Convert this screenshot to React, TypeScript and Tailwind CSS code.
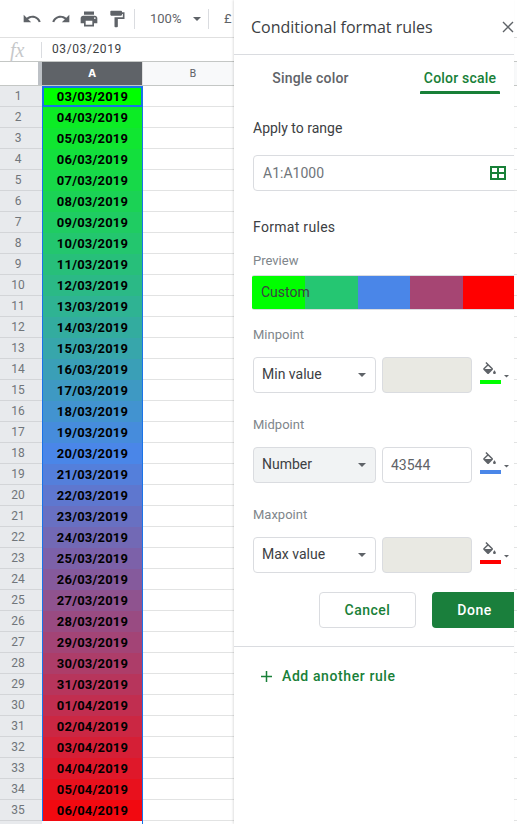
import React from "react";

const mix = (a: number[], b: number[], t: number) =>
  `rgb(${a.map((v, i) => Math.round(v + (b[i] - v) * t)).join(",")})`;
const G = [0, 255, 0];
const M = [74, 134, 232];
const R = [255, 0, 0];

const pad = (n: number) => String(n).padStart(2, "0");
const rows = Array.from({ length: 35 }, (_, i) => {
  const n = i + 1;
  const label = n <= 29 ? `${pad(n + 2)}/03/2019` : `${pad(n - 29)}/04/2019`;
  let color: string;
  if (n === 1) color = mix(G, G, 0);
  else if (n <= 18) color = mix(G, M, (n + 1) / 19);
  else color = mix(M, R, ((n - 18) / 17) * 0.93);
  return { n, label, color };
});

const Mi = ({ d, size = 24, className = "" }: { d: string; size?: number; className?: string }) => (
  <svg width={size} height={size} viewBox="0 0 24 24" className={className} fill="currentColor">
    <path d={d} />
  </svg>
);

const Caret = ({ w = 8, className = "" }: { w?: number; className?: string }) => (
  <svg width={w} height={w / 2} viewBox="0 0 8 4" className={className} fill="currentColor">
    <path d="M0 0h8L4 4z" />
  </svg>
);

const FILL =
  "M16.56 8.94L7.62 0 6.21 1.41l2.38 2.38-5.15 5.15c-.59.59-.59 1.54 0 2.12l5.5 5.5c.29.29.68.44 1.06.44s.77-.15 1.06-.44l5.5-5.5c.59-.58.59-1.53 0-2.12zM5.21 10L10 5.21 14.79 10H5.21zM19 11.5s-2 2.17-2 3.5c0 1.1.9 2 2 2s2-.9 2-2c0-1.33-2-3.5-2-3.5z";

function Point({
  label,
  select,
  value,
  color,
  gray,
  className = "",
}: {
  label: string;
  select: string;
  value?: string;
  color: string;
  gray?: boolean;
  className?: string;
}) {
  return (
    <div className={className}>
      <div className="text-[13px] leading-[16px] text-[#80868b]">{label}</div>
      <div className="mt-[14px] flex h-[36px]">
        <div
          className={`flex h-[36px] w-[123px] items-center justify-between rounded-[4px] border border-[#dadce0] pl-[8px] pr-[8px] text-[14px] text-[#3c4043] ${
            gray ? "bg-[#f1f3f4]" : "bg-white"
          }`}
        >
          <span className="pb-[2px]">{select}</span>
          <Caret className="mr-[1px] text-[#5f6368]" />
        </div>
        <div
          className={`ml-[6px] flex h-[36px] w-[90px] items-center rounded-[4px] border border-[#dadce0] pl-[8px] text-[14px] text-[#5f6368] ${
            value ? "bg-white" : "bg-[#e9e9e3]"
          }`}
        >
          {value}
        </div>
        <div className="relative ml-[8px] w-[32px]">
          <Mi d={FILL} size={17} className="ml-[1px] mt-[5px] text-[#5f6368]" />
          <div className={`ml-[0px] mt-[1px] h-[4px] w-[21px] ${color}`} />
          <Caret w={5} className="absolute left-[24px] top-[18px] text-[#5f6368]" />
        </div>
      </div>
    </div>
  );
}

function Toolbar() {
  return (
    <div className="flex h-[38px] items-center border-b border-[#e0e0e0] bg-white text-[#5f6368]">
      <Mi className="ml-[22px]" size={20} d="M12.5 8c-2.65 0-5.05.99-6.9 2.6L2 7v9h9l-3.62-3.62c1.39-1.16 3.16-1.88 5.12-1.88 3.54 0 6.55 2.31 7.6 5.5l2.37-.78C21.08 11.03 17.15 8 12.5 8z" />
      <Mi className="ml-[9px]" size={20} d="M18.4 10.6C16.55 8.99 14.15 8 11.5 8c-4.65 0-8.58 3.03-9.96 7.22L3.9 16c1.05-3.19 4.05-5.5 7.6-5.5 1.95 0 3.73.72 5.12 1.88L13 16h9V7l-3.6 3.6z" />
      <Mi className="ml-[8px]" size={20} d="M19 8H5c-1.66 0-3 1.34-3 3v6h4v4h12v-4h4v-6c0-1.66-1.34-3-3-3zm-3 11H8v-5h8v5zm3-7c-.55 0-1-.45-1-1s.45-1 1-1 1 .45 1 1-.45 1-1 1zm-1-9H6v4h12V3z" />
      <Mi className="ml-[8px]" size={20} d="M18 4V3c0-.55-.45-1-1-1H5c-.55 0-1 .45-1 1v4c0 .55.45 1 1 1h12c.55 0 1-.45 1-1V6h1v4H9v11c0 .55.45 1 1 1h2c.55 0 1-.45 1-1v-9h8V4h-3z" />
      <div className="ml-[7px] h-[20px] w-px bg-[#dadce0]" />
      <span className="ml-[15px] w-[29px] text-[13px]">100%</span>
      <Caret className="ml-[14px]" />
      <div className="ml-[7px] h-[20px] w-px bg-[#dadce0]" />
      <span className="ml-[15px] text-[13px]">£</span>
    </div>
  );
}

function Sheet() {
  return (
    <div className="w-[234px] shrink-0 overflow-hidden bg-white font-['Roboto',sans-serif]">
      <Toolbar />
      <div className="flex h-[24px] items-center border-b border-[#c4c7c5] bg-white">
        <span className="ml-[10px] w-[31px] font-['Liberation_Serif',serif] text-[20px] italic leading-none text-[#c6c8ca]">fx</span>
        <div className="h-[16px] w-px bg-[#dadce0]" />
        <span className="ml-[10px] pb-[1px] text-[12px] tracking-[0.6px] text-[#3c4043]">03/03/2019</span>
      </div>
      <div className="flex h-[24px] border-b border-[#c4c7c5] bg-[#f8f9fa] text-[12px]">
        <div className="h-full w-[42px] shrink-0 border-r-[4px] border-[#bdc1c6] bg-white" />
        <div className="flex w-[100px] shrink-0 items-center justify-center bg-[#5f6368] font-['DejaVu_Sans',sans-serif] text-[10px] font-bold text-white">A</div>
        <div className="flex w-[101px] shrink-0 items-center justify-center border-l border-[#e0e0e0] font-['DejaVu_Sans',sans-serif] text-[10px] text-[#5f6368]">B</div>
      </div>
      {rows.map((r) => (
        <div key={r.n} className="flex h-[21px]">
          <div className="flex w-[42px] items-center justify-center border-b border-[#d3d5d8] bg-[#e8eaed] pr-[6px] text-[12px] text-[#70757a]">{r.n}</div>
          <div
            className={`box-border flex w-[101px] items-center justify-center text-[13px] font-bold tracking-[0.2px] text-black ${
              r.n === 1 ? "border-2 border-[#1a73e8]" : "border-x border-[#1a73e8]"
            }`}
            style={{ backgroundColor: r.color }}
          >
            {r.label}
          </div>
          <div className="flex-1 border-b border-[#e2e3e3]" />
        </div>
      ))}
      <div className="flex h-[4px]">
        <div className="w-[42px] bg-[#e8eaed]" />
        <div className="w-[101px] border-r border-[#1a73e8]" />
      </div>
    </div>
  );
}

function Panel() {
  return (
    <div className="z-10 h-[824px] w-[280px] shrink-0 overflow-hidden bg-white font-['Roboto',sans-serif] shadow-[-1px_0_2px_rgba(0,0,0,0.12)]">
      <div className="flex h-[55px] items-center justify-between border-b border-[#dadce0] pl-[17px]">
        <span className="font-['Open_Sans',sans-serif] text-[16px] [font-weight:500] text-[#3c4043]">Conditional format rules</span>
        <svg width="12" height="12" viewBox="0 0 12 12" className="text-[#5f6368]" stroke="currentColor" strokeWidth="1.4">
          <path d="M1 1l10 10M11 1L1 11" />
        </svg>
      </div>
      <div className="flex h-[39px] text-[14px] font-medium leading-[16px] tracking-[0.2px]">
        <div className="ml-[38px] w-[77px] pt-[15px] text-center text-[#5f6368]">Single color</div>
        <div className="ml-[71px] flex w-[80px] flex-col items-center justify-end">
          <span className="text-[#188038]">Color scale</span>
          <div className="mt-[5px] h-[3px] w-[80px] rounded-t-[1px] bg-[#188038]" />
        </div>
      </div>
      <div className="pl-[19px]">
        <div className="mt-[26px] text-[14px] leading-[16px] text-[#3c4043]">Apply to range</div>
        <div className="mt-[19px] flex h-[36px] w-[280px] items-center rounded-[4px] border border-[#dadce0] pl-[9px] text-[14px] text-[#70757a]">
          <span className="w-[227px]">A1:A1000</span>
          <svg width="16" height="14" viewBox="0 0 16 14" fill="none" stroke="#188038" strokeWidth="2">
            <path d="M1 1h14v12H1zM8 1v12M1 7h14" />
          </svg>
        </div>
        <div className="mt-[28px] text-[14px] leading-[16px] tracking-[0.3px] text-[#3c4043]">Format rules</div>
        <div className="mt-[18px] text-[13px] leading-[16px] text-[#80868b]">Preview</div>
        <div className="relative -ml-[1px] mt-[6px] flex h-[35px] w-[262px] overflow-hidden rounded-l-[2px] border-y border-[#dadce0] text-[14px] text-[#3c4043]">
          <div className="w-[53px] bg-[#00ff00]" />
          <div className="w-[53px] bg-[#25c672]" />
          <div className="w-[52px] bg-[#4a86e8]" />
          <div className="w-[53px] bg-[#a64573]" />
          <div className="w-[51px] bg-[#ff0000]" />
          <span className="absolute left-[9px] top-[8px] leading-[16px]">Custom</span>
        </div>
        <Point className="mt-[17px]" label="Minpoint" select="Min value" color="bg-[#00ff00]" />
        <Point className="mt-[24px]" label="Midpoint" select="Number" value="43544" color="bg-[#4a86e8]" gray />
        <Point className="mt-[24px]" label="Maxpoint" select="Max value" color="bg-[#ff0000]" />
        <div className="mt-[19px] flex h-[36px] w-[300px] pl-[66px] text-[14px] font-medium tracking-[0.5px]">
          <div className="flex w-[97px] items-center justify-center rounded-[4px] border border-[#dadce0] text-[#188038]">Cancel</div>
          <div className="ml-[16px] flex w-[85px] items-center justify-center rounded-[4px] bg-[#1a7f3c] text-white">Done</div>
        </div>
      </div>
      <div className="mt-[18px] h-px bg-[#dadce0]" />
      <div className="mt-[19px] flex h-[20px] items-center pl-[27px] text-[14px] font-medium tracking-[0.6px] text-[#188038]">
        <svg width="11" height="11" viewBox="0 0 11 11" stroke="currentColor" strokeWidth="1.5">
          <path d="M5.5 0v11M0 5.5h11" />
        </svg>
        <span className="ml-[10px]">Add another rule</span>
      </div>
    </div>
  );
}

function Sliver() {
  return (
    <div className="flex-1 overflow-hidden bg-white">
      <div className="h-[38px] border-b border-[#e0e0e0]" />
      <div className="h-[24px] border-b border-[#c4c7c5]" />
      <div className="h-[24px] border-b border-[#c4c7c5] bg-[#f8f9fa]" />
      {rows.map((r) => (
        <div key={r.n} className="h-[21px] border-b border-[#e2e3e3]" />
      ))}
    </div>
  );
}

export default function App() {
  return (
    <div className="flex h-[824px] w-[517px] overflow-hidden bg-white">
      <Sheet />
      <Panel />
      <Sliver />
    </div>
  );
}
